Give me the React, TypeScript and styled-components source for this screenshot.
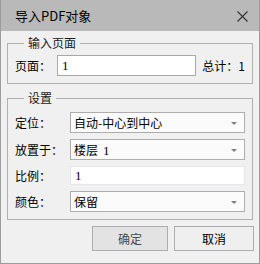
import React from 'react';
import styled, { createGlobalStyle } from 'styled-components';

const GlobalStyle = createGlobalStyle`
	body {
		margin: 0;
		font-family: 'Noto Sans CJK SC', 'Liberation Sans', sans-serif;
		font-size: 12px;
		color: #000;
	}
`;

const Ventana = styled.div`
	width: 260px;
	height: 264px;
	box-sizing: border-box;
	border: 1px solid #9c9c9c;
	border-top: none;
	background-color: #f0f0f0;
	display: flex;
	flex-direction: column;
`;

const BarraTitulo = styled.div`
	height: 31px;
	flex-shrink: 0;
	background-color: #b9b9b9;
	display: flex;
	align-items: center;
	justify-content: space-between;
	padding: 0 11px 0 14px;
	font-size: 13px;
	line-height: 16px;
`;

const Cerrar = styled.svg`
	width: 11px;
	height: 11px;
	margin-top: 1px;
`;

const Cuerpo = styled.div`
	flex: 1;
	display: flex;
	flex-direction: column;
	padding: 4px 6px 0 6px;
`;

interface GrupoProps {
	top: number;
	gap: number;
	offset?: number;
}

const Grupo = styled.fieldset<GrupoProps>`
	margin: ${({ offset }) => offset || 0}px 0 0 0;
	min-width: 0;
	padding: ${({ top }) => top}px 7px 7px 7px;
	border: 1px solid #b0b0b0;
	display: flex;
	flex-direction: column;
	gap: ${({ gap }) => gap}px;
`;

const Leyenda = styled.legend`
	margin-left: 9px;
	padding: 0 4px;
	font-size: 12px;
	line-height: 16px;
	color: #1a1a1a;
`;

const Fila = styled.div<{ h: number }>`
	display: flex;
	align-items: center;
	height: ${({ h }) => h}px;
`;

const Etiqueta = styled.span<{ w: number }>`
	width: ${({ w }) => w}px;
	flex-shrink: 0;
	line-height: 16px;
	white-space: nowrap;
`;

const Entrada = styled.div<{ light?: boolean }>`
	flex: 1;
	height: 100%;
	box-sizing: border-box;
	background-color: #fff;
	border: 1px solid ${({ light }) => (light ? '#e3e6ea' : '#a8a8a8')};
	padding: 0 4px;
	display: flex;
	align-items: center;
	font-family: 'Liberation Serif', serif;
	font-size: 13px;
`;

const Total = styled.span`
	margin-left: 6px;
	white-space: nowrap;
	line-height: 16px;
`;

const Combo = styled.div`
	flex: 1;
	height: 100%;
	box-sizing: border-box;
	background-color: #fbfbfb;
	border: 1px solid #adadad;
	padding: 0 7px 0 3px;
	display: flex;
	align-items: center;
	justify-content: space-between;
	white-space: nowrap;
`;

const Flecha = styled.span`
	width: 0;
	height: 0;
	border-left: 3px solid transparent;
	border-right: 3px solid transparent;
	border-top: 3px solid #808080;
	margin-top: 1px;
`;

const Num = styled.span`
	font-family: 'Liberation Serif', serif;
	font-size: 13px;
	margin-left: 5px;
`;

const Botones = styled.div`
	display: flex;
	justify-content: flex-end;
	gap: 6px;
	margin: 6px -1px 0 0;
`;

const Boton = styled.div<{ w: number; primary?: boolean }>`
	width: ${({ w }) => w}px;
	height: 25px;
	box-sizing: border-box;
	border: 1px solid #adadad;
	background-color: ${({ primary }) => (primary ? '#e3e3e3' : '#efefef')};
	color: ${({ primary }) => (primary ? '#4a4a4a' : '#000')};
	display: flex;
	align-items: center;
	justify-content: center;
	font-size: 12px;
`;

const App: React.FC = () => {
	return (
		<>
			<GlobalStyle />
			<Ventana>
				<BarraTitulo>
					<span>导入PDF对象</span>
					<Cerrar viewBox="0 0 11 11">
						<path d="M0.5 0.5 L10.5 10.5 M10.5 0.5 L0.5 10.5" stroke="#333" strokeWidth="1.1" fill="none" />
					</Cerrar>
				</BarraTitulo>
				<Cuerpo>
					<Grupo top={4} gap={0}>
						<Leyenda>输入页面</Leyenda>
						<Fila h={21}>
							<Etiqueta w={42}>页面：</Etiqueta>
							<Entrada>1</Entrada>
							<Total>总计：1</Total>
						</Fila>
					</Grupo>
					<Grupo top={6} gap={6} offset={6}>
						<Leyenda>设置</Leyenda>
						<Fila h={21}>
							<Etiqueta w={55}>定位：</Etiqueta>
							<Combo>
								<span>自动-中心到中心</span>
								<Flecha />
							</Combo>
						</Fila>
						<Fila h={21}>
							<Etiqueta w={55}>放置于：</Etiqueta>
							<Combo>
								<span>
									楼层<Num>1</Num>
								</span>
								<Flecha />
							</Combo>
						</Fila>
						<Fila h={19}>
							<Etiqueta w={55}>比例：</Etiqueta>
							<Entrada light>1</Entrada>
						</Fila>
						<Fila h={21}>
							<Etiqueta w={55}>颜色：</Etiqueta>
							<Combo>
								<span>保留</span>
								<Flecha />
							</Combo>
						</Fila>
					</Grupo>
					<Botones>
						<Boton w={76} primary>
							确定
						</Boton>
						<Boton w={80}>取消</Boton>
					</Botones>
				</Cuerpo>
			</Ventana>
		</>
	);
};

export default App;
